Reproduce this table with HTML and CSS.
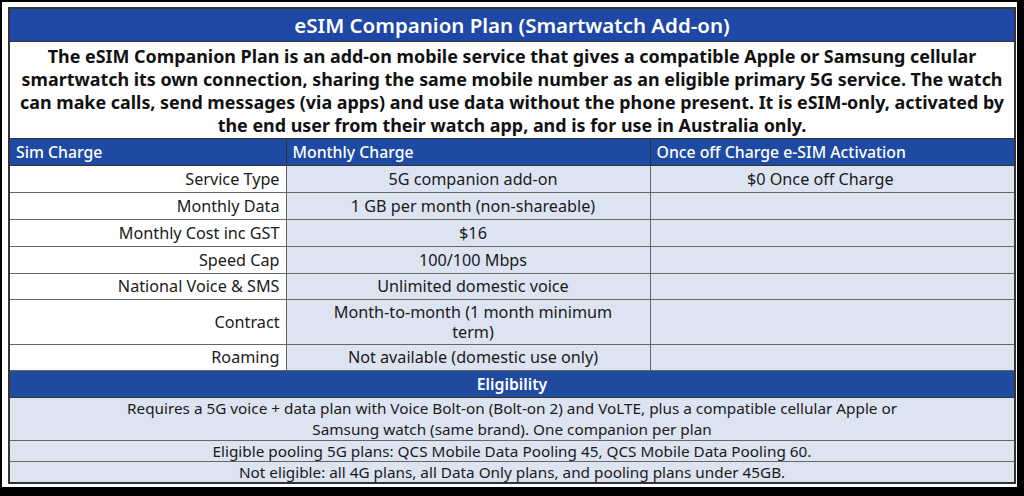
FILE: index.html
```
<!DOCTYPE html>
<html>
<head>
<meta charset="utf-8">
<link rel="stylesheet" href="styles.css">
</head>
<body>
<div class="panel">
<table class="plan">
<colgroup><col class="c1"><col class="c2"><col class="c3"></colgroup>
<tr class="title"><td colspan="3">eSIM Companion Plan (Smartwatch Add-on)</td></tr>
<tr class="desc"><td colspan="3">The eSIM Companion Plan is an add-on mobile service that gives a compatible Apple or Samsung cellular smartwatch its own connection, sharing the same mobile number as an eligible primary 5G service. The watch can make calls, send messages (via apps) and use data without the phone present. It is eSIM-only, activated by the end user from their watch app, and is for use in Australia only.</td></tr>
<tr class="head"><td>Sim Charge</td><td>Monthly Charge</td><td>Once off Charge e-SIM Activation</td></tr>
<tr class="row"><td class="label">Service Type</td><td class="val">5G companion add-on</td><td class="val3">$0 Once off Charge</td></tr>
<tr class="row"><td class="label">Monthly Data</td><td class="val">1 GB per month (non-shareable)</td><td class="val3"></td></tr>
<tr class="row"><td class="label">Monthly Cost inc GST</td><td class="val">$16</td><td class="val3"></td></tr>
<tr class="row"><td class="label">Speed Cap</td><td class="val">100/100 Mbps</td><td class="val3"></td></tr>
<tr class="row short"><td class="label">National Voice &amp; SMS</td><td class="val">Unlimited domestic voice</td><td class="val3"></td></tr>
<tr class="row tall"><td class="label">Contract</td><td class="val">Month-to-month (1 month minimum<br>term)</td><td class="val3"></td></tr>
<tr class="row short"><td class="label">Roaming</td><td class="val">Not available (domestic use only)</td><td class="val3"></td></tr>
<tr class="elig"><td colspan="3">Eligibility</td></tr>
<tr class="note two"><td colspan="3">Requires a 5G voice + data plan with Voice Bolt-on (Bolt-on 2) and VoLTE, plus a compatible cellular Apple or<br>Samsung watch (same brand). One companion per plan</td></tr>
<tr class="note"><td colspan="3">Eligible pooling 5G plans: QCS Mobile Data Pooling 45, QCS Mobile Data Pooling 60.</td></tr>
<tr class="note"><td colspan="3">Not eligible: all 4G plans, all Data Only plans, and pooling plans under 45GB.</td></tr>
</table>
</div>
</body>
</html>
```
FILE: styles.css
```
html, body {
  margin: 0;
  padding: 0;
  background: #000;
}
body {
  font-family: "Noto Sans", "Open Sans", sans-serif;
  color: #1a1a1a;
}
.panel {
  margin: 2px 0 0 2px;
  width: 1015px;
  height: 485px;
  background: #fff;
  padding: 5px 0 0 6px;
  box-sizing: border-box;
}
.plan {
  width: 1006px;
  border-collapse: collapse;
  table-layout: fixed;
  border: 2px solid #333;
}
.c1 { width: 277px; }
.c2 { width: 364px; }
.c3 { width: 365px; }
.plan td {
  padding: 0 6px;
  border: 1px solid #666;
  font-size: 16.2px;
  line-height: 20px;
  white-space: nowrap;
  box-sizing: border-box;
}
.title td {
  background: #1e47a6;
  color: #fff;
  font-size: 20.5px;
  font-weight: 600;
  text-align: center;
  height: 33px;
  padding: 0;
  border-color: #333;
}
.desc td {
  background: #fff;
  font-size: 17.9px;
  font-weight: 700;
  line-height: 23px;
  text-align: center;
  height: 97px;
  padding: 3px 4px 1px;
  color: #111;
  border-color: #333;
  white-space: normal;
}
.head td {
  background: #1f4aa3;
  color: #fff;
  font-weight: 500;
  font-size: 15.8px;
  height: 27px;
  border-color: #333;
}
.row td {
  height: 27px;
  padding-top: 0;
  padding-bottom: 0;
}
.row.short td { height: 26px; }
.row.tall td { height: 45px; }
.label {
  background: #fff;
  text-align: right;
}
.val, .val3 {
  background: #dce3f1;
  text-align: center;
}
.row td.label { padding-right: 6px; }
.row td.val { padding-left: 16px; }
.row td.val3 { padding-right: 30px; }
.elig td {
  background: #1f4a9e;
  color: #fff;
  font-weight: 600;
  font-size: 15.8px;
  text-align: center;
  height: 27px;
  border-color: #333;
}
.note td {
  background: #dce3f1;
  text-align: center;
  font-size: 15.3px;
  height: 21px;
  line-height: 20px;
}
.note.two td { height: 43px; line-height: 21px; }
```
